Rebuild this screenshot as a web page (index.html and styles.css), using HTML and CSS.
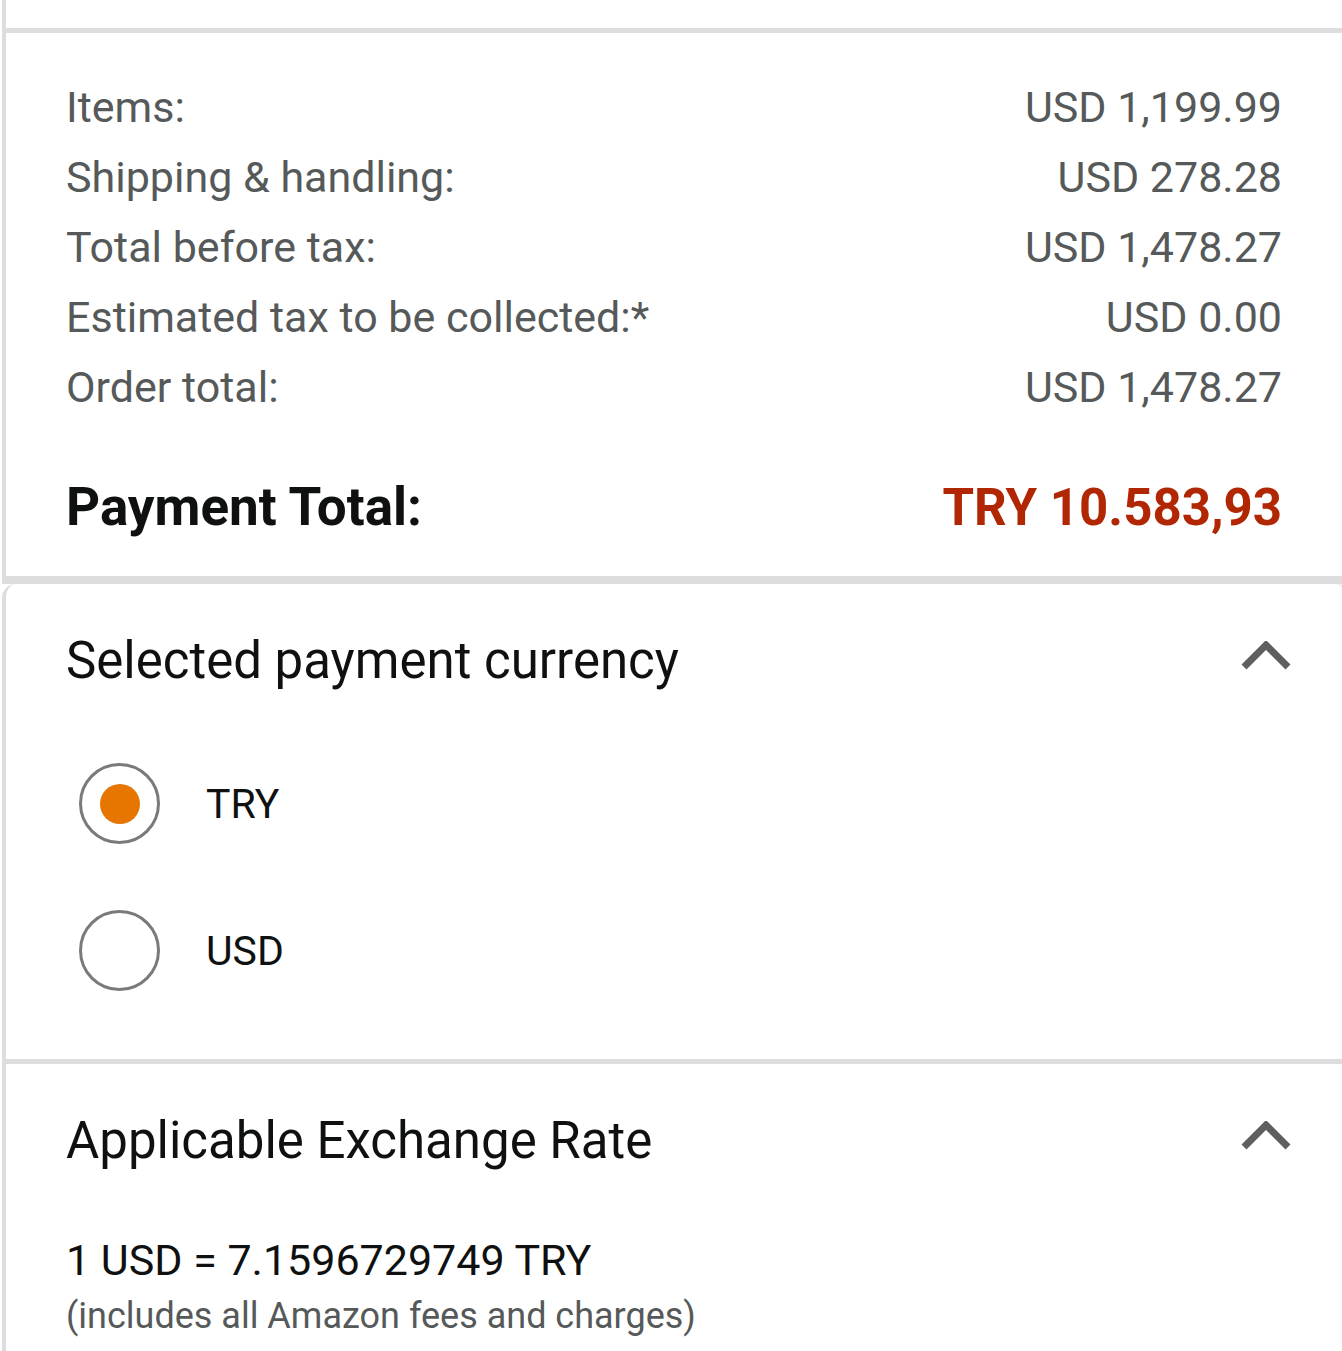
FILE: index.html
```html
<!DOCTYPE html>
<html>
<head>
<meta charset="utf-8">
<link rel="stylesheet" href="styles.css">
</head>
<body>
<div class="page">
  <div class="box top"></div>
  <div class="box summary">
    <div class="row"><span>Items:</span><span>USD 1,199.99</span></div>
    <div class="row"><span>Shipping &amp; handling:</span><span>USD 278.28</span></div>
    <div class="row"><span>Total before tax:</span><span>USD 1,478.27</span></div>
    <div class="row"><span>Estimated tax to be collected:*</span><span>USD 0.00</span></div>
    <div class="row"><span>Order total:</span><span>USD 1,478.27</span></div>
    <div class="row total"><span class="ptl">Payment Total:</span><span class="red">TRY 10.583,93</span></div>
  </div>
  <div class="box currency">
    <div class="head">
      <span class="title">Selected payment currency</span>
      <svg class="chev" width="52" height="30" viewBox="0 0 52 30"><polyline points="4,26 26,4 48,26" fill="none" stroke="#5f5f5f" stroke-width="7"/></svg>
    </div>
    <div class="options">
      <div class="opt"><span class="radio on"><span class="dot"></span></span><span class="lbl">TRY</span></div>
      <div class="opt"><span class="radio"></span><span class="lbl">USD</span></div>
    </div>
  </div>
  <div class="box rate">
    <div class="head">
      <span class="title">Applicable Exchange Rate</span>
      <svg class="chev" width="52" height="30" viewBox="0 0 52 30"><polyline points="4,26 26,4 48,26" fill="none" stroke="#5f5f5f" stroke-width="7"/></svg>
    </div>
    <div class="rateval">1 USD = 7.1596729749 TRY</div>
    <div class="note">(includes all Amazon fees and charges)</div>
  </div>
</div>
</body>
</html>
```
FILE: styles.css
```css
html, body { margin: 0; padding: 0; background: #fff; }
body { font-family: Roboto, "Noto Sans", sans-serif; color: #0f1111; }
.page { width: 1342px; overflow: hidden; }
.box { margin-left: 2px; border-left: 4px solid #dddddd; background: #fff; }
.top { height: 28px; border-bottom: 5px solid #dddddd; }
.summary { padding: 39px 60px 33px 60px; border-bottom: 8px solid #dddddd; }
.row { display: flex; justify-content: space-between; font-size: 43px; line-height: 70px; color: #565959; }
.row.total { margin-top: 50px; font-size: 51px; font-weight: 700; color: #0f1111; align-items: baseline; }
.ptl { font-size: 53px; }
.red { color: #b12704; }
.currency { border-radius: 14px 14px 0 0; border-right: 4px solid #dddddd; margin-right: -8px; padding: 0 0 0 60px; border-bottom: 5px solid #dddddd; height: 475px; box-sizing: content-box; }
.head { display: flex; justify-content: space-between; align-items: center; height: 148px; padding-top: 4px; box-sizing: border-box; }
.currency .head { padding-right: 54px; }
.title { font-size: 51px; color: #0f1111; }
.chev { display: block; margin-top: -8px; }
.options { display: flex; flex-direction: column; gap: 66px; padding-top: 31px; }
.opt { display: flex; align-items: center; margin-left: 13px; }
.radio { width: 75px; height: 75px; border: 3px solid #7a7a7a; border-radius: 50%; display: flex; align-items: center; justify-content: center; box-sizing: content-box; }
.dot { width: 40px; height: 40px; border-radius: 50%; background: #e77600; }
.lbl { margin-left: 46px; font-size: 41px; color: #0f1111; }
.rate { padding: 0 0 30px 60px; }
.rate .head { height: 148px; padding-right: 50px; }
.rateval { font-size: 43px; line-height: 56px; margin-top: 20px; color: #0f1111; }
.note { font-size: 36px; line-height: 56px; color: #565959; }
```
